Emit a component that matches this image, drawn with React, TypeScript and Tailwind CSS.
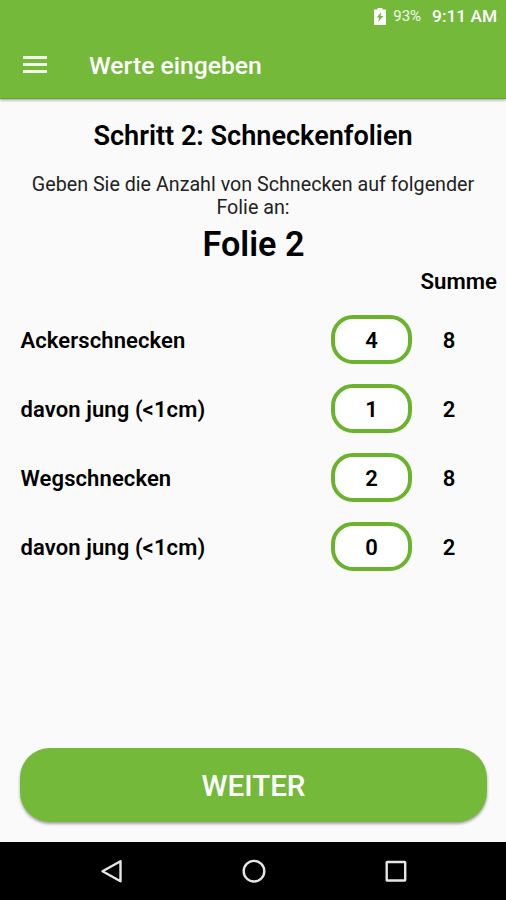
const rows = [
  { label: "Ackerschnecken", value: 4, sum: 8 },
  { label: "davon jung (<1cm)", value: 1, sum: 2 },
  { label: "Wegschnecken", value: 2, sum: 8 },
  { label: "davon jung (<1cm)", value: 0, sum: 2 },
];

function StatusBar() {
  return (
    <div className="flex h-8 items-center justify-end pr-[9px] text-white">
      <svg width="12" height="17" viewBox="0 0 12 17" className="mr-[7px]">
        <path fill="#fff" fillRule="evenodd" d="M3.500 0h5v1.500H12V17H0V1.500h3.500zM7.300 4 2.700 9.500h2.600L4.200 14 9.300 8H6.500z" />
      </svg>
      <span className="mr-[11px] text-[15px] leading-4 text-white/90">93%</span>
      <span className="text-[17.300px] leading-5 font-medium">9:11 AM</span>
    </div>
  );
}

function AppBar() {
  return (
    <header className="relative bg-[#75b93b] shadow-[0_1px_3px_rgba(0,0,0,0.4)]">
      <StatusBar />
      <div className="flex h-[67px] items-center border-b border-[#65ab22] pl-[23px]">
        <button aria-label="Menü" className="mb-[2px] flex w-6 flex-col gap-1">
          <span className="h-[3px] bg-white/90" />
          <span className="h-[3px] bg-white/90" />
          <span className="h-[3px] bg-white/90" />
        </button>
        <h1 className="mt-[1px] ml-[42px] text-[24.700px] leading-8 font-medium text-white">Werte eingeben</h1>
      </div>
    </header>
  );
}

function NavigationBar() {
  return (
    <nav className="flex h-[58px] items-center justify-between bg-black pr-[97px] pl-[98px]">
      <svg width="26" height="26" viewBox="0 0 26 26" fill="none" stroke="#e6e6e6" strokeWidth="2.400" strokeLinejoin="round">
        <path d="M22.500 3.200v20L4.500 13.200z" />
      </svg>
      <svg width="26" height="26" viewBox="0 0 26 26" fill="none" stroke="#e6e6e6" strokeWidth="2.400">
        <circle cx="13" cy="13.200" r="10.300" />
      </svg>
      <svg width="26" height="26" viewBox="0 0 26 26" fill="none" stroke="#e6e6e6" strokeWidth="2.400">
        <rect x="3.700" y="4" width="18.500" height="18.500" rx="0.500" />
      </svg>
    </nav>
  );
}

export default function App() {
  return (
    <div className="flex h-[900px] w-[506px] flex-col bg-[#fafafa] font-['Roboto',sans-serif] text-black">
      <AppBar />
      <main className="flex flex-1 flex-col">
        <h2 className="mt-[21px] text-center text-[27.100px] leading-8 font-semibold">Schritt 2: Schneckenfolien</h2>
        <p className="mt-[21px] px-5 text-center text-[19.700px] leading-[23px] text-[#222]">
          Geben Sie die Anzahl von Schnecken auf folgender Folie an:
        </p>
        <p className="mt-[5px] pl-px text-center text-[34.200px] leading-10 font-semibold">Folie 2</p>
        <div className="mt-1 pr-[9px] text-right text-[22.200px] leading-[27px] font-semibold">Summe</div>
        <div className="mt-[10px] flex flex-col">
          {rows.map((row, i) => (
            <div key={i} className="flex h-[69px] items-center pl-5 text-[22px] leading-7 font-semibold">
              <span className="w-[311px] pt-[2px] pl-[0.5px] tracking-[0.1px]">{row.label}</span>
              <span className="flex h-[49px] w-[81px] items-center justify-center rounded-[22px] border-4 border-[#6ab42d] bg-white pt-[2px]">
                {row.value}
              </span>
              <span className="w-[74px] pt-[2px] text-center">{row.sum}</span>
            </div>
          ))}
        </div>
        <button className="mx-5 mt-auto mb-5 h-[74px] w-[467px] rounded-[30px] bg-[#75b93b] pt-[3px] text-[29.500px] font-medium text-white shadow-[0_2px_3px_rgba(0,0,0,0.35)]">
          WEITER
        </button>
      </main>
      <NavigationBar />
    </div>
  );
}
